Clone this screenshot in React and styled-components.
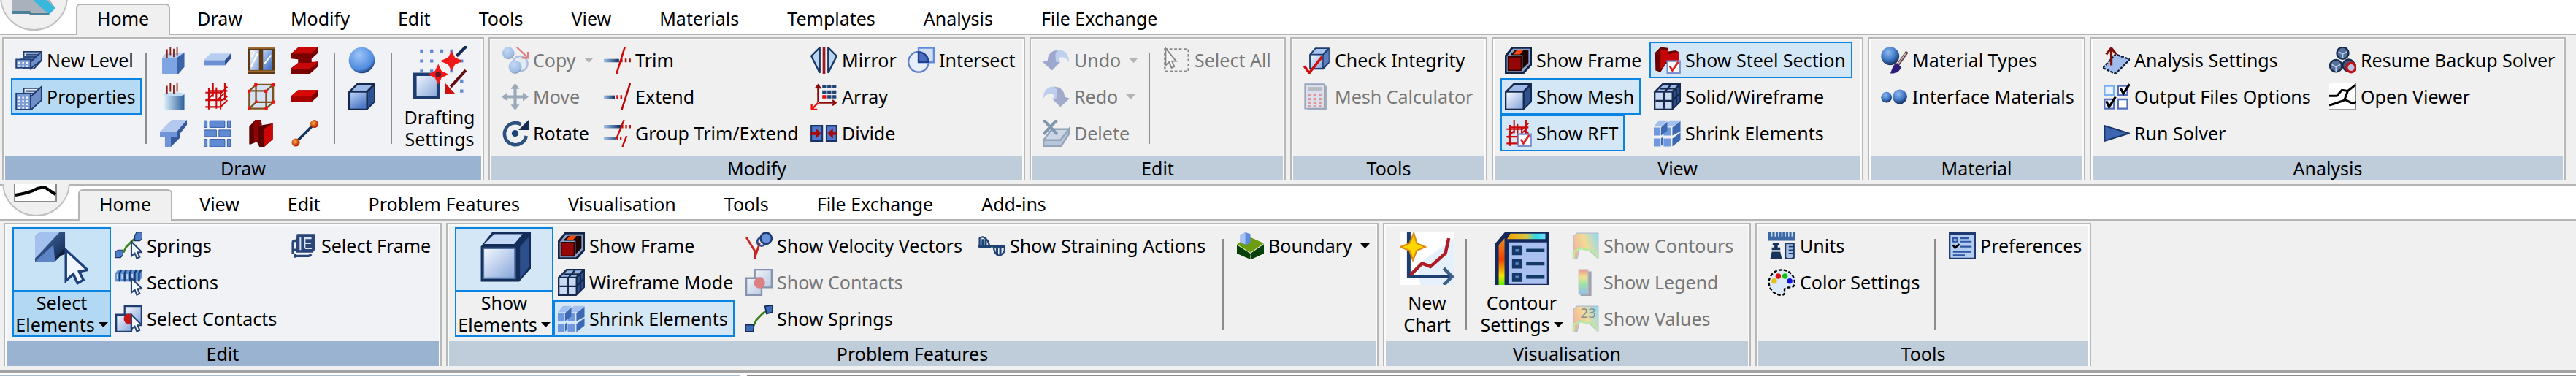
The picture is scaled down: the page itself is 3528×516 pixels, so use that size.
import React from 'react';
import styled, { createGlobalStyle, css } from 'styled-components';

const Global = createGlobalStyle`
  * { box-sizing: border-box; }
  body { margin: 0; background: #fff; font-family: "Noto Sans", "Open Sans", sans-serif; font-size: 25px; color: #000; }
  button { font: inherit; color: inherit; margin: 0; padding: 0; border: 0; background: none; text-align: left; white-space: nowrap; }
  svg { display: block; flex: none; }
`;

const Ribbon = styled.section`
  background: #f0f0f0;
  overflow: hidden;
`;

const TabStrip = styled.div`
  position: relative;
  display: flex;
  align-items: flex-end;
  gap: 8px;
  height: ${p => (p.$lower ? 50 : 48)}px;
  padding-left: ${p => (p.$lower ? 107 : 104)}px;
  background: ${p => (p.$lower
    ? 'linear-gradient(#b4b4b4 2px, #fff 2px, #fff 48px, #b4b4b4 48px)'
    : 'linear-gradient(#fff 46px, #b4b4b4 46px)')};
  overflow: hidden;
`;

const Tab = styled.button`
  height: 43px;
  padding: 0 27px 6px;
  border: 2px solid transparent;
  border-bottom: 0;
  border-radius: 6px 6px 0 0;
  line-height: 34px;
  ${p => p['aria-selected'] && css`
    background: #f0f0f0;
    border-color: #b4b4b4;
  `}
`;

const Orb = styled.button`
  position: absolute;
  left: ${p => (p.$lower ? 3 : 0)}px;
  top: ${p => (p.$lower ? -49 : -51)}px;
  width: 93px;
  height: 93px;
  border: 2px solid #c0c0c0;
  border-radius: 50%;
  background: #f0f0f0;
  overflow: hidden;
`;

const Groups = styled.div`
  display: flex;
  gap: 6px;
  padding: 3px 0 5px ${p => (p.$lower ? 5 : 3)}px;
`;

const GroupBox = styled.section`
  display: flex;
  flex-direction: column;
  flex: none;
  width: ${p => p.$w}px;
  border: 2px solid #b8b8b8;
  border-bottom: 0;
  padding: 2px 2px 0;
  background: #fafbfd;
`;

const GroupBody = styled.div`
  display: flex;
  padding: 2px 0 6px 8px;
  background: ${p => (p.$hot ? '#f0f2f5' : '#f0f0f0')};
`;

const Caption = styled.h2`
  margin: 0;
  font-size: 25px;
  font-weight: 400;
  line-height: 34px;
  text-align: center;
  background: ${p => (p.$hot ? '#9ab3d1' : '#bfccda')};
`;

const Column = styled.div`
  display: flex;
  flex-direction: column;
  align-items: flex-start;
  flex: none;
  width: ${p => (p.$w ? p.$w + 'px' : 'auto')};
  height: 150px;
`;

const Separator = styled.div`
  flex: none;
  width: 2px;
  height: 124px;
  margin: 16px 12px 0 4px;
  background: #8c8c8c;
`;

const tone = {
  hot: css`background: #b6daf4; border-color: #0a84e3;`,
  on: css`background: #d4e7f6; border-color: #0a84e3;`,
};

const Command = styled.button`
  display: flex;
  align-items: center;
  gap: 6px;
  height: 50px;
  padding: 0 7px 0 4px;
  border: 2px solid transparent;
  &:disabled { color: #787878; }
  &:disabled svg { opacity: 0.5; }
  ${p => tone[p.$tone]}
`;

const CommandText = styled.span`
  margin-right: ${p => (p.$menu ? 5 : 0)}px;
`;

const BigCommand = styled.button`
  display: flex;
  flex-direction: column;
  flex: none;
  width: ${p => p.$w}px;
  height: 150px;
  border: 2px solid ${p => (p.$tone ? '#0a84e3' : 'transparent')};
`;

const BigPicture = styled.span`
  display: flex;
  justify-content: center;
  align-self: stretch;
  height: 86px;
  padding-top: 4px;
  background: ${p => ({ hot: '#c9e3f6', on: '#d4e7f6' }[p.$tone] || 'none')};
`;

const BigLabel = styled.span`
  display: flex;
  flex-direction: column;
  align-items: center;
  align-self: stretch;
  height: 62px;
  line-height: 30px;
  border-top: 2px solid ${p => (p.$tone ? '#0a84e3' : 'transparent')};
  background: ${p => (p.$tone === 'hot' ? '#b3d8f3' : 'none')};
`;

const BigLine = styled.span`
  display: flex;
  align-items: center;
  gap: 5px;
`;

const StatusEdge = styled.div`
  display: flex;
  gap: 9px;
  padding-top: 3px;
  border-top: 4px solid #a3a3a3;
  background: #fff;
`;

const EdgePiece = styled.div`
  height: 2px;
  flex: ${p => (p.$wide ? '1' : '0 0 1014px')};
  background: ${p => (p.$wide ? '#8a8a8a' : '#a9bdd0')};
`;

const Arrow = () => (
  <svg width="13" height="7" viewBox="0 0 13 7" aria-hidden="true"><path d="M0 0h13L6.5 7z" fill="currentColor" /></svg>
);

const Defs = () => (
  <svg width="0" height="0" style={{ position: 'absolute' }} aria-hidden="true">
    <defs>
      <linearGradient id="sky" x1="0" y1="0" x2="0.6" y2="1"><stop offset="0" stopColor="#b9d0f6" /><stop offset="1" stopColor="#4d78c6" /></linearGradient>
      <linearGradient id="pale" x1="0" y1="0" x2="1" y2="1"><stop offset="0" stopColor="#f6f9ff" /><stop offset="1" stopColor="#86a5da" /></linearGradient>
      <linearGradient id="deep" x1="0" y1="0" x2="1" y2="1"><stop offset="0" stopColor="#4c76b4" /><stop offset="1" stopColor="#0d2144" /></linearGradient>
      <linearGradient id="bar" x1="0" y1="0" x2="1" y2="0"><stop offset="0" stopColor="#9fc4ea" /><stop offset="1" stopColor="#0d2f63" /></linearGradient>
      <linearGradient id="cyl" x1="0" y1="0" x2="1" y2="0"><stop offset="0" stopColor="#e4f6ff" /><stop offset="1" stopColor="#2c5f9c" /></linearGradient>
      <linearGradient id="heat" x1="0" y1="0" x2="0" y2="1"><stop offset="0" stopColor="#e8452a" /><stop offset="0.3" stopColor="#f2d43a" /><stop offset="0.6" stopColor="#4fd65a" /><stop offset="1" stopColor="#3a8cf0" /></linearGradient>
      <linearGradient id="heatMap" x1="0" y1="0.6" x2="1" y2="0.2"><stop offset="0" stopColor="#f07a50" /><stop offset="0.5" stopColor="#f5c840" /><stop offset="1" stopColor="#3cc8e8" /></linearGradient>
      <linearGradient id="heatSide" x1="0" y1="0" x2="0" y2="1"><stop offset="0" stopColor="#e89020" /><stop offset="0.45" stopColor="#f04000" /><stop offset="0.8" stopColor="#f0e000" /><stop offset="1" stopColor="#60f000" /></linearGradient>
      <linearGradient id="heatTop" x1="0" y1="0" x2="1" y2="0"><stop offset="0" stopColor="#f0a000" /><stop offset="0.5" stopColor="#d8c840" /><stop offset="0.75" stopColor="#30d8e8" /><stop offset="1" stopColor="#70e0f8" /></linearGradient>
      <radialGradient id="ball" cx="0.4" cy="0.3" r="0.7"><stop offset="0" stopColor="#8db8ee" /><stop offset="0.6" stopColor="#3f78c4" /><stop offset="1" stopColor="#16305c" /></radialGradient>
      <radialGradient id="globe" cx="0.4" cy="0.3" r="0.7"><stop offset="0" stopColor="#9cc4f8" /><stop offset="0.8" stopColor="#4f8ade" /><stop offset="1" stopColor="#1f4078" /></radialGradient>
      <radialGradient id="ember" cx="0.4" cy="0.4" r="0.6"><stop offset="0" stopColor="#ffb040" /><stop offset="1" stopColor="#b01800" /></radialGradient>
    </defs>
  </svg>
);

const Cube = ({ front = 'url(#sky)' }) => (
  <>
    <path d="M0 5 5 0H16V11L11 16H0z" fill="#16294d" />
    <path d="M1.800 4.600 5.600 1H14.200L10.600 4.600z" fill="#9db9e6" />
    <path d="M11.600 5.300 15.200 1.700V10.600L11.600 14.300z" fill="#2e5290" />
    <path d="M1 5.500H10.600V15H1z" fill={front} />
  </>
);
const Rods = () => <path d="M4.2 1.5v5M6.2 0v5M8.2 1.2v5M10.2 0v5" stroke="#8c1a10" strokeWidth="0.8" />;
const Mesh = () => <path d="M1 5.500h9.500L14 2M1 10h10l3-2.500M1 14h9l4-4M3 3v12.500M7.500 2.500V15M5.500 0v8M12.500 0v10M10 4v11.500M5.500 6.500l-4 4M3.500 4.500H14M12 6 8 10" stroke="#cc0808" strokeWidth="0.900" fill="none" />;
const CheckBadge = () => (
  <>
    <path d="M8 8.5h7.5v7H8z" fill="#fff" stroke="#7c8fd0" strokeWidth="0.9" />
    <path d="M9.5 11.5 11 14l3.5-5" fill="none" stroke="#e02020" strokeWidth="1.2" />
  </>
);
const Pointer = () => <path d="M9.500 5.500v8.600l2-1.700 1.200 3 1.700-.800-1.200-2.800h2.600z" fill="#f4f8ff" stroke="#224273" strokeWidth="0.900" />;
const Floors = ({ tall }) => (
  <>
    <path d="M5 3h10.6v5L11 13H5z" fill="#f0f4fa" stroke="#1d3a6e" strokeWidth="0.8" />
    <path d="M6 4.6h8.5M4.5 6h9M3 7.5h9" stroke="#2c4c86" strokeWidth="1" />
    <path d={tall ? 'M9 8 15.5 2v8L9 16z' : 'M9 9 15.5 3v5L9 13z'} fill="#6f8fc8" stroke="#1d3a6e" strokeWidth="0.8" />
    <path d={tall ? 'M0.5 6H9v9.5H0.5z' : 'M0.5 7.5H9v5H0.5z'} fill="#7d9cd4" stroke="#24427a" strokeWidth="0.8" />
    <path d={tall ? 'M2.3 8v7M4.6 8v7M6.9 8v7' : 'M2.3 9v3M4.6 9v3M6.9 9v3'} stroke="#fff" strokeWidth="1" strokeDasharray="1 1" />
  </>
);
const HeatFlag = () => (
  <>
    <path d="M0.8 15.5V2.5L3 .5h12.5v15l-5-4.5-6-2L3 15.5z" fill="url(#heatMap)" stroke="#6a88b0" strokeWidth="0.5" />
    <path d="M1 15.5v-4l4-2 8 1.5 2 4" stroke="#8ae060" strokeWidth="1.4" fill="none" />
  </>
);

const icons = {
  newLevel: <Floors />,
  properties: <Floors tall />,
  column: <><path d="M1.5 6.5 4 3.500h10.500v8.500L11 16H1.5z" fill="#3c62a8" /><path d="M1.500 6.500H10V16H1.500z" fill="#7ea4e4" /><path d="M1.500 6.500 4 3.500h10.500L10 6.500z" fill="#b8d0f4" /><Rods /></>,
  roundColumn: <><path d="M2 6.5h12.5V16H2z" fill="url(#cyl)" /><ellipse cx="8.3" cy="6.5" rx="6.2" ry="1.2" fill="#c4dcf2" /><Rods /></>,
  tbeam: <><path d="M0 7 7 0h9l-5 7z" fill="#b4c9ee" /><path d="M0 7H10v3H6.500v6h-3.500v-6h-3z" fill="#6f94d8" /><path d="M10 7 16 0v3l-4 5v2.500L6.500 16v-6H10z" fill="#34599c" /></>,
  slab: <><path d="M0 8 4 4h12l-3.5 4z" fill="#b9cdf0" /><path d="M0 8h12.5v3H0z" fill="#6c90d4" /><path d="M12.5 8 16 4v3l-3.5 4z" fill="#2d5094" /></>,
  mesh: <Mesh />,
  bricks: <path d="M0 .5h2v4H0zM3.5 .5h9v4h-9zM14 .5h2v4h-2zM0 6h7.5v4H0zM9 6h7v4H9zM0 11.5h2V16H0zM3.5 11.5h9V16h-9zM14 11.5h2V16h-2z" fill="#5f8ad4" stroke="#2f559c" strokeWidth="0.4" />,
  window: <><path d="M0 0h16v16H0z" fill="#5e3a14" /><path d="M1.5 2h5.3v11.8H1.5z" fill="url(#pale)" /><path d="M9.2 2h5.3v11.8H9.2z" fill="url(#sky)" /><path d="M2 12 6 4M10 10l4-5M2.5 6 4 3" stroke="#fff" strokeWidth="0.9" /><path d="M0 14.4h16M0 .8h16" stroke="#a06c34" strokeWidth="0.8" /></>,
  frameCube: <><path d="M1 4.5 5 .8h10.2v10.4L11 15H1z" fill="#d5e2f5" /><path d="M1 4.5h10V15H1zM1 4.5 5 .8h10.2v10.4L11 15M11 4.5l4.2-3.7M5 .8v10.4L1 15M5 11.2h10" fill="none" stroke="#80501c" strokeWidth="1" /><path d="M0 3.8h1.8v1.8H0zM10 3.8h1.8v1.8H10zM4 0h1.8v1.8H4zM14.2 0H16v1.8h-1.8zM0 14.2h1.8V16H0zM10.2 14.2H12V16h-1.8zM14.2 10.2H16V12h-1.8zM4.5 10.2h1.4v1.4H4.5z" fill="#f01010" /></>,
  steelPost: <><path d="M1 4 4.5 0H8L7 3.5 15 2v9.500L10 16H7L5.500 13 2 14.500H1z" fill="#5c0000" /><path d="M3.500 2 4.500 0H8l.500 3L6.500 4v8.500L4 13.500z" fill="#8c0404" /><path d="M9.500 5.500 15 2v9.500L9.500 16z" fill="#cc0606" /></>,
  beamI: <><path d="M0 4 4.500 0H16v3.500L12 7v2h4v2.500L11 16H0v-3.500l4-3V7.500L0 7z" fill="#7a0000" /><path d="M0 4 4.500 0H16l-4.500 4zM0 13l4-3.500h7L16 8.500 11 13z" fill="#c80808" /></>,
  redSlab: <><path d="M0 7.5 4 4h12v3.500L12 11H0z" fill="#7a0000" /><path d="M0 7.500 4 4h12l-4 3.500z" fill="#d80808" /><path d="M0 7.500h12V11H0z" fill="#a80000" /></>,
  link: <><path d="m2.5 13.500 11-11" stroke="#16335c" strokeWidth="1.600" /><circle cx="13.600" cy="2.400" r="2.400" fill="url(#ember)" /><circle cx="2.600" cy="13.400" r="2.400" fill="url(#ember)" /></>,
  sphere: <circle cx="8" cy="8" r="7.700" fill="url(#globe)" />,
  cube: <Cube />,
  paleCube: <Cube front="url(#pale)" />,
  copy: <><circle cx="4" cy="3.8" r="3.6" fill="url(#globe)" /><circle cx="11" cy="10" r="4.4" fill="#dce8fa" stroke="#6f90c8" /><circle cx="8" cy="12" r="3.9" fill="url(#globe)" /><path d="m9 .3 6 5.7M15.6 3v3.6H12" stroke="#d01010" fill="none" /></>,
  move: <path d="M8 0l2.6 3.4H8.9v3.7h3.7V5.4L16 8l-3.4 2.6V8.9H8.9v3.7h1.7L8 16l-2.6-3.4h1.7V8.9H3.4v1.7L0 8l3.4-2.6v1.7h3.7V3.4H5.4z" fill="#4a6488" />,
  rotate: <><path d="M11.5 2.700A6.500 6.500 0 1 0 14.600 9.500" fill="none" stroke="#2c507f" strokeWidth="2" /><path d="M16 0v6H10z" fill="#142c54" /><circle cx="8" cy="8" r="2" fill="#1e4475" /></>,
  trim: <><path d="M0 7.2h9v2H0z" fill="url(#bar)" /><path d="M10.5 7v2.2M13 7v2.2M15.4 7v2.2" stroke="#a81010" strokeWidth="1.1" /><path d="M12.5 0 7.5 16" stroke="#d00808" strokeWidth="1.1" /></>,
  extend: <><path d="M0 7.2h6.5v2H0z" fill="url(#bar)" /><path d="M8 7v2.2M10.3 7v2.2" stroke="#e01010" strokeWidth="1.1" /><path d="M15.6 0 10.5 16" stroke="#b80808" strokeWidth="1.1" /></>,
  groupTrim: <><path d="M0 3h10v2H0zM0 10h7v2H0z" fill="url(#bar)" /><path d="M11 3v2M13.2 3v2M15.5 3v2M8 10v2M10 10v2" stroke="#c01010" strokeWidth="1" /><path d="M12 0 7.5 11M13.5 9.5 11 16" stroke="#c80808" strokeWidth="1" /></>,
  mirror: <><path d="M5.5.5v15L.5 5.5zM10.5.5v15l5-10z" fill="#b8d4ee" stroke="#183664" strokeWidth="1" /><path d="M8 0v16" stroke="#a01818" strokeWidth="1.6" /></>,
  array: <><path d="M4.5 11V1.5M3 3l1.5-2L6 3M5 11.5h10M13 10l2 1.5-2 1.5" stroke="#8c0c0c" fill="none" /><path d="M4.5 11.5.8 15.4M.7 12.5v3H4" stroke="#f01010" fill="none" /><path d="M7 1h2.3v2H7zM10 1h2.3v2H10zM13 1h2.3v2H13zM10 4.2h2.3v2H10zM13 4.2h2.3v2H13zM7 4.2h2.3v2H7zM10 7h2.3v2H10zM13 7h2.3v2H13z" fill="#1f4478" /><path d="M7 7h2.3v2H7z" fill="#e01010" /></>,
  divide: <><path d="M.5 3.5h6.5v9H.5zM9.5 3.5h6v9h-6z" fill="#5278cc" stroke="#1a3264" strokeWidth="0.9" /><path d="M0 7h3.2V5l3.2 3-3.2 3V9H0zM16 7h-2.700V5l-3.200 3 3.200 3V9H16z" fill="#a00c0c" /></>,
  intersect: <><circle cx="6.5" cy="9" r="6" fill="#e8effc" stroke="#5f80c8" /><path d="M6.5.7h9v8.5h-9z" fill="#b8d0f4" fillOpacity="0.5" stroke="#5f8ae0" /><path d="M6.5 3.2A6 6 0 0 1 12.4 9H6.5z" fill="#4a6ec0" stroke="#24408c" /></>,
  undo: <><path d="M4.5 9C4 4 7 1.8 10 2c4 0 5.8 3.5 5.5 7C14 6 11 5.5 9.5 7v2z" fill="#8fb0ee" /><path d="M3 8C3 4 6 2 9 2.2 7 3.5 7.5 6 8 9h2.500L5.500 14 0 9z" fill="#4f62b0" /></>,
  redo: <><path d="M11.5 9C12 4 9 1.8 6 2 2 2 .2 5.5.5 9 2 6 5 5.5 6.5 7v2z" fill="#8eb0ec" /><path d="M13 8c0-4-3-6-6-5.800C9 3.500 8.500 6 8 9H5.500l5 5L16 9z" fill="#5566ac" /></>,
  eraser: <><path d="m.5 12 5-6.500H16L11 14H1z" fill="#a8c0e0" stroke="#3c5880" /><path d="M.500 12h10l5-6.500v3L11 15.500H.500z" fill="#7d9cc8" stroke="#3c5880" /><path d="m.5 0 8 8.500M8.500 0 .5 8.500" stroke="#14406c" strokeWidth="1.800" /></>,
  selectAll: <><path d="M1 1.500h14v13H1z" fill="none" stroke="#202020" strokeDasharray="1.600 1.200" /><path d="M1.500 1v10l2-2 1.500 3.500 1.600-.800L5.200 8.500h2.500z" fill="#fff" stroke="#202020" strokeWidth="0.800" /></>,
  checkCube: <><path d="M3.500 4.500 7 .5h8.500v9L12 13.500H3.500z" fill="#1f3c70" /><path d="M4.300 5h7v7.500h-7z" fill="url(#pale)" /><path d="M5 4.200 7.500 1.300H14L11.500 4.200z" fill="#a9c4ee" /><path d="M12 5l3-3v7l-3 3z" fill="#5b7fc0" /><path d="M.6 11.500 3.500 15.500 11 6" fill="none" stroke="#d00c0c" strokeWidth="1.500" /></>,
  calculator: <><path d="M2.500 1.500H14V16H2.500z" fill="#606c80" /><path d="M1 .5h11.500V15H1z" fill="#c8d4ea" stroke="#425c8c" strokeWidth="0.800" /><path d="M3 2.200h8v2.300H3z" fill="#7f8796" /><path d="M3.500 6.500v7.500M6.700 6.500v7.500M9.900 6.500v7.500" stroke="#d03838" strokeWidth="1.600" strokeDasharray="1.300 0.900" /></>,
  frame: <><path d="M.5 5.500 4.500.5h11v10L11 15.500H.5z" fill="#8ba3cc" stroke="#142444" strokeWidth="1.300" /><path d="M3.500 4.500 6 2H14v7.500L10.500 13V5H4z" fill="#1c0404" /><path d="M5 4.500 7 2h4l-2 2.500z" fill="#f04a08" /><path d="M2 6h7.700V14H2z" fill="#960606" stroke="#300" strokeWidth="0.800" /></>,
  rft: <><Mesh /><CheckBadge /></>,
  steelCheck: <><path d="M.8 3.500 4 .2 8.500.8v2l4.500-.6 2 1V10H7l-3 5-3-1z" fill="#6a0000" /><path d="M4 2h4l1 2.500 6-1.500v6H7l-1 3-2 1z" fill="#c40606" /><CheckBadge /></>,
  wire: <><Cube front="#c8daf2" /><path d="M1 10.300h10l4.500-4.500M6 5.500V15M6 5.500l4-4.500M13.400 3.500v9M3.600 3.200h9" stroke="#16294d" strokeWidth="1" fill="none" /></>,
  shrink: <><path d="M0 4.500h4v4.800H0zM5.800 4.500h4.500v4.800H5.800zM0 11h4v4.800H0zM5.800 11h4.500v4.800H5.800z" fill="#6f98de" /><path d="M0 4 3 .3h5L4.800 4zM6 4 9.500.3H16L11.500 4z" fill="#a4c0f0" /><path d="M4.300 4.500 8 1v5.500L4.300 9.300zM11 4.500 15.800.8v6L11 9.300zM4.300 11l1-1v4.500l-1 1zM11 11l4.800-3.500V12L11 15.800z" fill="#3d68b4" /></>,
  materials: <><circle cx="5.500" cy="5.500" r="5.400" fill="url(#ball)" /><path d="m15.500 3-6 8.500" stroke="#5a4048" strokeWidth="1.800" /><path d="m15 3.500-5 7" stroke="#d0b0b0" strokeWidth="0.700" /><path d="M9 9.500l3 2.500c-1 3-3 4-6.500 3.800 1-1.500 1-4.300 3.500-6.300z" fill="#2e1c7c" /></>,
  interfaces: <><circle cx="3.300" cy="8.300" r="3.200" fill="url(#ball)" /><circle cx="11.200" cy="8" r="4.300" fill="url(#ball)" /></>,
  analysis: <><path d="M0 12.500 7.500 4.500 16 7.500 7.500 16z" fill="#9fbcec" stroke="#10203c" strokeDasharray="1.800 0.600" /><path d="M5 11V2M2 4.500 5 .8l3 3.700" fill="none" stroke="#800c0c" strokeWidth="1.400" /></>,
  outputs: <><path d="M1 1.500h5.500V7H1z" fill="#eaf4ff" stroke="#7ab0f0" strokeWidth="1" /><path d="M9 1.500h5.500V7H9zM1 9.500h5.500V15H1zM9 9.500h5.500V15H9z" fill="#fff" stroke="#5470c0" strokeWidth="1" /><path d="m10.500 3 1.700 3L15.800.5M2 10.500l1.700 3.500L7.500 8" fill="none" stroke="#000" strokeWidth="1.400" /></>,
  run: <path d="M1 3.500v9L15.500 8z" fill="#3d65b0" stroke="#1a3568" strokeWidth="0.900" />,
  resume: <><circle cx="8" cy="3.800" r="3.500" fill="#56709a" stroke="#162a4c" /><circle cx="4" cy="11.300" r="3.600" fill="#56709a" stroke="#162a4c" /><circle cx="11.500" cy="11" r="3.500" fill="#40587e" stroke="#162a4c" /><path d="M5.500 3 8 4.300 10.500 3M8 4.300V7M1.500 10.500 4 12l2.500-1.500M4 12v3" stroke="#b8cce8" strokeWidth="0.700" fill="none" /><circle cx="13" cy="12.300" r="2.700" fill="#b8c4e0" stroke="#c01018" strokeWidth="1.500" /></>,
  viewer: <><path d="M0 0h16v16H0z" fill="#fff" /><path d="M0 15.600h15.600V0" fill="none" stroke="#808080" strokeWidth="0.800" /><path d="M0 7.500h4.500l3-3.500 3.500.5 4.500-3.500M0 13l4-1.200L9 10l2-5.500M9 9.500l5 2.500 2-1" fill="none" stroke="#000" strokeWidth="1.300" /></>,
  selSprings: <><path d="M2 13.500h1l1-2h1l1.500-3L8 7l2-2 3-2.500" fill="none" stroke="#3c8020" strokeWidth="1.200" /><path d="M12.500 0H16v3.500L14.500 5H11.500V2zM0 11.500 1.500 10.500H4.500V13.500L3 15H0z" fill="#4f7cc8" stroke="#1a3668" strokeWidth="0.500" /><Pointer /></>,
  sections: <><path d="M0 2.500 1.500.5h14.500V5l-2 2.500H0z" fill="#5f90d4" /><path d="M2.500 2.500v5M5.500 2.500v5M8.500 2.500v5M11.500 2.500v5M14 2.500v5M3.500.5 2.500 2.500M6.500.5l-1 2M9.500.5l-1 2M12.500.5l-1 2M15.500.5l-1.500 2" stroke="#183a74" strokeWidth="1" /><path d="M1.200 3v3M4 3v3M7 3v3M10 3v3" stroke="#bcd8f6" strokeWidth="0.800" /><Pointer /></>,
  selContacts: <><path d="M5.500.5h10V11h-10z" fill="url(#pale)" stroke="#1f3c70" /><path d="M.5 5.500h9v10h-9z" fill="url(#pale)" stroke="#1f3c70" /><circle cx="8" cy="8" r="3" fill="#c81414" /><Pointer /></>,
  contacts: <><path d="M5.500.5h10V11h-10z" fill="url(#pale)" stroke="#1f3c70" /><path d="M.5 5.500h9v10h-9z" fill="url(#pale)" stroke="#1f3c70" /><circle cx="8.300" cy="8.300" r="3.300" fill="#c81414" /></>,
  selFrame: <><path d="M4 1.500Q4 1 4.500 1H14.500Q15 1 15 1.500V10L13.500 12H3.500z" fill="#2a4678" /><path d="M1.800 13V6Q1.800 5 3 5H4.500V10.500H1.800M3 12.500V15M3 14h8q1 0 1.500-1" fill="none" stroke="#2a4678" strokeWidth="1.500" /><path d="M6.200 3v7.500M8.800 9.500V3.500h4M9 6.500h3.500M9 9.500h4" stroke="#d8e2f0" strokeWidth="0.900" fill="none" /></>,
  velocity: <><path d="M.5 3 5.500 11V16M5.500 15 8.500 6" fill="none" stroke="#c42424" strokeWidth="1.200" /><circle cx="9.500" cy="5.500" r="2.500" fill="none" stroke="#2c4c88" strokeWidth="1.200" /><circle cx="12.200" cy="3.600" r="3.300" fill="#6a92da" stroke="#1d3a70" strokeWidth="1.100" /></>,
  springs: <><path d="M2 13.500h1l1-2h1l1.500-3L8 7l2-2 3-2.500" fill="none" stroke="#3c8020" strokeWidth="1.200" /><path d="M11.500.5 16 0v4l-3.500 1zM0 11.500h4l1 .5-.5 3.500H0z" fill="#3f6cb8" stroke="#122a58" strokeWidth="0.700" /></>,
  straining: <><path d="M.7 9V3.500Q3 1.500 5.500 5L7 9zM9 9h6.500v2Q14 14 11.500 13.500 9.500 12.500 9 9z" fill="#e4ecf8" stroke="#1f4274" /><path d="M0 8.200h16M2.500 4v4M4.300 4v4M11 9v4M13 9v4" stroke="#1f4274" strokeWidth="1.300" /></>,
  boundary: <><path d="M0 7.500 8 12.500V16L0 12.500zM8 12.500 16 7v5.500L8.500 16z" fill="#06400a" /><path d="M0 7 7 2.500 16 6.500 8 12z" fill="#6c9c10" /><path d="M2 1.500 5 0l3 1v5L5.500 7.500 2 6z" fill="#5f8ade" /><path d="M2 1.500 5 0v7L2 6z" fill="#a4c2f4" /></>,
  showContours: <HeatFlag />,
  legend: <><path d="M5 1.500h6.500V16H5z" fill="#505868" /><path d="M4 .5h5.500V15H4z" fill="url(#heat)" stroke="#8090a8" strokeWidth="0.500" /></>,
  values: <><HeatFlag /><text x="5" y="7.500" fontSize="8" fill="#20283c">23</text></>,
  units: <><path d="M0 0h16v5H0z" fill="#3c68a4" /><path d="M2 0v2.500M4 0v2.500M6 0v2.500M8 0v2.500M10 0v2.500M12 0v2.500M14 0v2.500" stroke="#c8dcf4" strokeWidth="0.700" /><path d="M2.500 6.500h4v1.200h-1V9H7v1.500H2V9h1.500V7.700h-1zM2 11.500h5L8 16H1l1-4.500z" fill="#14345c" /><path d="M10 6.500h5V15q-2.500 1.500-5 0z" fill="#a8c0e4" stroke="#1c3868" /><path d="M12 8.500h2.500M12 10.500h2.500M12 12.500h2.500" stroke="#1c3868" strokeWidth="0.700" /></>,
  palette: <><path d="M8 .6a7.400 7.400 0 1 0-.5 14.900c2.500 0 2-1.500 2-3.200 0-1.500 2-1.200 3.500-1.300 2 0 2.600-1.500 2.500-3.500A7.500 7.500 0 0 0 8 .6z" fill="#dce9fb" stroke="#000" strokeWidth="1" strokeDasharray="2 1" /><circle cx="5.800" cy="4.300" r="1.600" fill="#e01010" /><circle cx="9.800" cy="4.300" r="1.600" fill="#10c010" /><circle cx="12.600" cy="7.200" r="1.600" fill="#1010e0" /><circle cx="3.400" cy="7.200" r="1.600" fill="#e8c010" /></>,
  preferences: <><path d="M.5.5h15v15H.5z" fill="#b4cbf2" stroke="#1e3a70" /><path d="M.5 1h15" stroke="#1e3a70" strokeWidth="1.400" /><path d="M2.500 3.500h2.500v2H2.500zM6.500 3.500h5.500M6.500 5.500h7M6.500 8.500h7M2.500 11.500h10.500M2.500 13.500h7" stroke="#2f56a0" strokeWidth="0.900" fill="none" /><path d="m2.500 7.500 1.200 1.700L6.300 7" stroke="#000" strokeWidth="1.200" fill="none" /></>,
};

const Blueprint = styled.svg.attrs({ 'aria-hidden': true })`
  width: ${p => p.$size}px;
  height: ${p => p.$size}px;
`;
const Icon = ({ name }) => <Blueprint $size={37} viewBox="0 0 16 16">{icons[name]}</Blueprint>;

const bigIcons = {
  drafting: <>
    <path d="M5 3h.1M11 3h.1M17 3h.1M23 3h.1M5 9h.1M11 9h.1M29 9h.1M5 15h.1M11 15h.1M23 15h.1M29 21h.1M29 27h.1" stroke="#5f88d8" strokeWidth="1.800" strokeLinecap="square" />
    <path d="M1 17h14v14H1z" fill="url(#pale)" stroke="#1f3c70" strokeWidth="2" />
    <path d="m32 0-6 6" stroke="#142c54" strokeWidth="1.800" />
    <path d="m23 4.500 1.500 3 3.500 1.500-3.500 1.500-1.500 3-1.500-3L18 9l3.500-1.500zM15 12.500l1.400 3 3.100 1.500-3.100 1.500-1.400 3-1.400-3-3.100-1.500 3.100-1.500z" fill="#f01818" stroke="#f01818" strokeWidth="1.500" />
    <circle cx="15" cy="17" r="1.700" fill="#601828" />
    <path d="m31.500 14.500-9 10" stroke="#600c10" strokeWidth="1.700" /><path d="M19 22v6.500h6z" fill="#d01010" />
  </>,
  selectElements: <>
    <path d="M0 3 3 0h15v12l-6 6H0z" fill="url(#deep)" /><path d="M0 3 3 0h12L2 14l-2 2z" fill="#a4c0ee" /><path d="M0 18 11 8l1 10z" fill="#5e84c8" />
    <path d="M12 16l6-6 1 3z" fill="#10203c" />
    <path d="M18.500 11v18.500l4.500-4 2.500 5.500 3.500-2-2.500-5L31.500 23z" fill="#f2f7ff" stroke="#1d3f7c" strokeWidth="1.500" />
  </>,
  showElements: <>
    <path d="M2 9 9 0h23v22l-7 8H2z" fill="#142c58" /><path d="M4 7.500 10 1.500h17L22 7.500z" fill="#c4d8f6" /><path d="M25.500 9 31 3v18l-5.500 7z" fill="#2c4f8c" />
    <path d="M3.500 10h19v18h-19z" fill="url(#pale)" stroke="#5374a8" />
  </>,
  newChart: <>
    <path d="M0 0h32v32H0z" fill="#fff" /><path d="M10 20 32 4v28H12z" fill="#e4f0fc" />
    <path d="M5 0v27h26" fill="none" stroke="#1d3f70" strokeWidth="2.200" /><path d="m26 22 5 5-5 5" fill="none" stroke="#3c6088" strokeWidth="2" />
    <path d="m6 26 7-7 5 2 9-8 2-9" fill="none" stroke="#b01c24" strokeWidth="2" />
    <path d="m8 1 1.800 6 5 2.200-5 2.200L7.500 17l-2-5.600L0 9.200 5.500 7z" fill="#ffd800" stroke="#e08c10" />
  </>,
  contour: <>
    <path d="M0 32V7L6 0h26v32z" fill="#14285c" /><path d="M2 32V8l3.500-4V32z" fill="url(#heatSide)" /><path d="M7 4.500 9 1.200h21V4.500z" fill="url(#heatTop)" />
    <path d="M8 6.500h23V31.500H8z" fill="#a9c0f0" />
    <path d="M11 9.500h4v3.600h-4zM11 17.500h4v3.600h-4zM11 25.500h4v3.600h-4z" fill="#5f84c0" stroke="#143868" strokeWidth="2" /><path d="M18.500 11.300h11M18.500 19.300h11M18.500 27.300h11" stroke="#143868" strokeWidth="1.900" />
  </>,
};
const BigIcon = ({ name }) => <Blueprint $size={73} viewBox="0 0 32 32">{bigIcons[name]}</Blueprint>;

const Cmd = ({ icon, text, label, off, menu, tone: t }) => (
  <Command type="button" disabled={off} $tone={t} aria-label={text ? undefined : label} aria-pressed={t ? true : undefined}>
    <Icon name={icon} />
    {text && <CommandText $menu={menu}>{text}</CommandText>}
    {menu && <Arrow />}
  </Command>
);

const Big = ({ icon, top, bottom, w, menu, tone: t }) => (
  <BigCommand type="button" $w={w} $tone={t}>
    <BigPicture $tone={t}><BigIcon name={icon} /></BigPicture>
    <BigLabel $tone={t}>
      <BigLine>{top}</BigLine>
      <BigLine>{bottom}{menu && <Arrow />}</BigLine>
    </BigLabel>
  </BigCommand>
);

const Group = ({ title, w, hot, children }) => (
  <GroupBox $w={w} aria-label={title}>
    <GroupBody $hot={hot}>{children}</GroupBody>
    <Caption $hot={hot}>{title}</Caption>
  </GroupBox>
);

const Tabs = ({ names, lower, children }) => (
  <TabStrip $lower={lower} role="tablist">
    <Orb type="button" $lower={lower} aria-label="Application menu">{children}</Orb>
    {names.map((n, i) => <Tab key={n} type="button" role="tab" aria-selected={i === 0}>{n}</Tab>)}
  </TabStrip>
);

export default function App() {
  return (
    <>
      <Global />
      <Defs />
      <Ribbon>
        <Tabs names={['Home', 'Draw', 'Modify', 'Edit', 'Tools', 'View', 'Materials', 'Templates', 'Analysis', 'File Exchange']}>
          <svg width="89" height="89" viewBox="0 0 89 89" aria-hidden="true">
            <path d="M14 40h46l14 20-9 9H41l-2-2H14z" fill="#a9b1bc" />
            <path d="M42 48h18l14 12-9 9z" fill="#38b8dc" />
            <path d="M14 64h25l2 3h24v3H40l-2-2H14z" fill="#4c7f98" />
          </svg>
        </Tabs>
        <Groups>
          <Group title="Draw" w={660} hot>
            <Column $w={180}>
              <Cmd icon="newLevel" text="New Level" />
              <Cmd icon="properties" text="Properties" tone="hot" />
            </Column>
            <Separator />
            <Column $w={60}><Cmd icon="column" label="Column" /><Cmd icon="roundColumn" label="Round column" /><Cmd icon="tbeam" label="Beam" /></Column>
            <Column $w={60}><Cmd icon="slab" label="Slab" /><Cmd icon="mesh" label="Reinforcement" /><Cmd icon="bricks" label="Wall" /></Column>
            <Column $w={60}><Cmd icon="window" label="Opening" /><Cmd icon="frameCube" label="Frame" /><Cmd icon="steelPost" label="Steel column" /></Column>
            <Column $w={60}><Cmd icon="beamI" label="Steel beam" /><Cmd icon="redSlab" label="Steel plate" /><Cmd icon="link" label="Link" /></Column>
            <Separator />
            <Column $w={60}><Cmd icon="sphere" label="Sphere" /><Cmd icon="cube" label="Box" /></Column>
            <Separator />
            <Big icon="drafting" top="Drafting" bottom="Settings" w={106} />
          </Group>
          <Group title="Modify" w={735}>
            <Column $w={140}>
              <Cmd icon="copy" text="Copy" off menu />
              <Cmd icon="move" text="Move" off />
              <Cmd icon="rotate" text="Rotate" />
            </Column>
            <Column $w={283}>
              <Cmd icon="trim" text="Trim" />
              <Cmd icon="extend" text="Extend" />
              <Cmd icon="groupTrim" text="Group Trim/Extend" />
            </Column>
            <Column $w={133}>
              <Cmd icon="mirror" text="Mirror" />
              <Cmd icon="array" text="Array" />
              <Cmd icon="divide" text="Divide" />
            </Column>
            <Column><Cmd icon="intersect" text="Intersect" /></Column>
          </Group>
          <Group title="Edit" w={351}>
            <Column $w={147}>
              <Cmd icon="undo" text="Undo" off menu />
              <Cmd icon="redo" text="Redo" off menu />
              <Cmd icon="eraser" text="Delete" off />
            </Column>
            <Separator />
            <Column><Cmd icon="selectAll" text="Select All" off /></Column>
          </Group>
          <Group title="Tools" w={270}>
            <Column>
              <Cmd icon="checkCube" text="Check Integrity" />
              <Cmd icon="calculator" text="Mesh Calculator" off />
            </Column>
          </Group>
          <Group title="View" w={509}>
            <Column $w={204}>
              <Cmd icon="frame" text="Show Frame" />
              <Cmd icon="paleCube" text="Show Mesh" tone="on" />
              <Cmd icon="rft" text="Show RFT" tone="on" />
            </Column>
            <Column>
              <Cmd icon="steelCheck" text="Show Steel Section" tone="on" />
              <Cmd icon="wire" text="Solid/Wireframe" />
              <Cmd icon="shrink" text="Shrink Elements" />
            </Column>
          </Group>
          <Group title="Material" w={298}>
            <Column>
              <Cmd icon="materials" text="Material Types" />
              <Cmd icon="interfaces" text="Interface Materials" />
            </Column>
          </Group>
          <Group title="Analysis" w={652}>
            <Column $w={310}>
              <Cmd icon="analysis" text="Analysis Settings" />
              <Cmd icon="outputs" text="Output Files Options" />
              <Cmd icon="run" text="Run Solver" />
            </Column>
            <Column>
              <Cmd icon="resume" text="Resume Backup Solver" />
              <Cmd icon="viewer" text="Open Viewer" />
            </Column>
          </Group>
        </Groups>
      </Ribbon>
      <Ribbon>
        <Tabs lower names={['Home', 'View', 'Edit', 'Problem Features', 'Visualisation', 'Tools', 'File Exchange', 'Add-ins']}>
          <svg width="89" height="89" viewBox="0 0 89 89" aria-hidden="true">
            <path d="M15 20h57v51H15z" fill="#fff" stroke="#8c8c8c" strokeWidth="2" />
            <path d="M16 62q20-3 30-9l10-2 15 10" fill="none" stroke="#000" strokeWidth="4" />
          </svg>
        </Tabs>
        <Groups $lower>
          <Group title="Edit" w={600} hot>
            <Big icon="selectElements" top="Select" bottom="Elements" w={135} menu tone="hot" />
            <Column $w={239}>
              <Cmd icon="selSprings" text="Springs" />
              <Cmd icon="sections" text="Sections" />
              <Cmd icon="selContacts" text="Select Contacts" />
            </Column>
            <Column><Cmd icon="selFrame" text="Select Frame" /></Column>
          </Group>
          <Group title="Problem Features" w={1277}>
            <Big icon="showElements" top="Show" bottom="Elements" w={135} menu tone="on" />
            <Column $w={257}>
              <Cmd icon="frame" text="Show Frame" />
              <Cmd icon="wire" text="Wireframe Mode" />
              <Cmd icon="shrink" text="Shrink Elements" tone="on" />
            </Column>
            <Column $w={319}>
              <Cmd icon="velocity" text="Show Velocity Vectors" />
              <Cmd icon="contacts" text="Show Contacts" off />
              <Cmd icon="springs" text="Show Springs" />
            </Column>
            <Column $w={336}><Cmd icon="straining" text="Show Straining Actions" /></Column>
            <Separator />
            <Column><Cmd icon="boundary" text="Boundary" menu /></Column>
          </Group>
          <Group title="Visualisation" w={504}>
            <Big icon="newChart" top="New" bottom="Chart" w={97} />
            <Separator />
            <Big icon="contour" top="Contour" bottom="Settings" w={126} menu />
            <Column>
              <Cmd icon="showContours" text="Show Contours" off />
              <Cmd icon="legend" text="Show Legend" off />
              <Cmd icon="values" text="Show Values" off />
            </Column>
          </Group>
          <Group title="Tools" w={460}>
            <Column $w={229}>
              <Cmd icon="units" text="Units" />
              <Cmd icon="palette" text="Color Settings" />
            </Column>
            <Separator />
            <Column><Cmd icon="preferences" text="Preferences" /></Column>
          </Group>
        </Groups>
        <StatusEdge><EdgePiece /><EdgePiece $wide /></StatusEdge>
      </Ribbon>
    </>
  );
}
